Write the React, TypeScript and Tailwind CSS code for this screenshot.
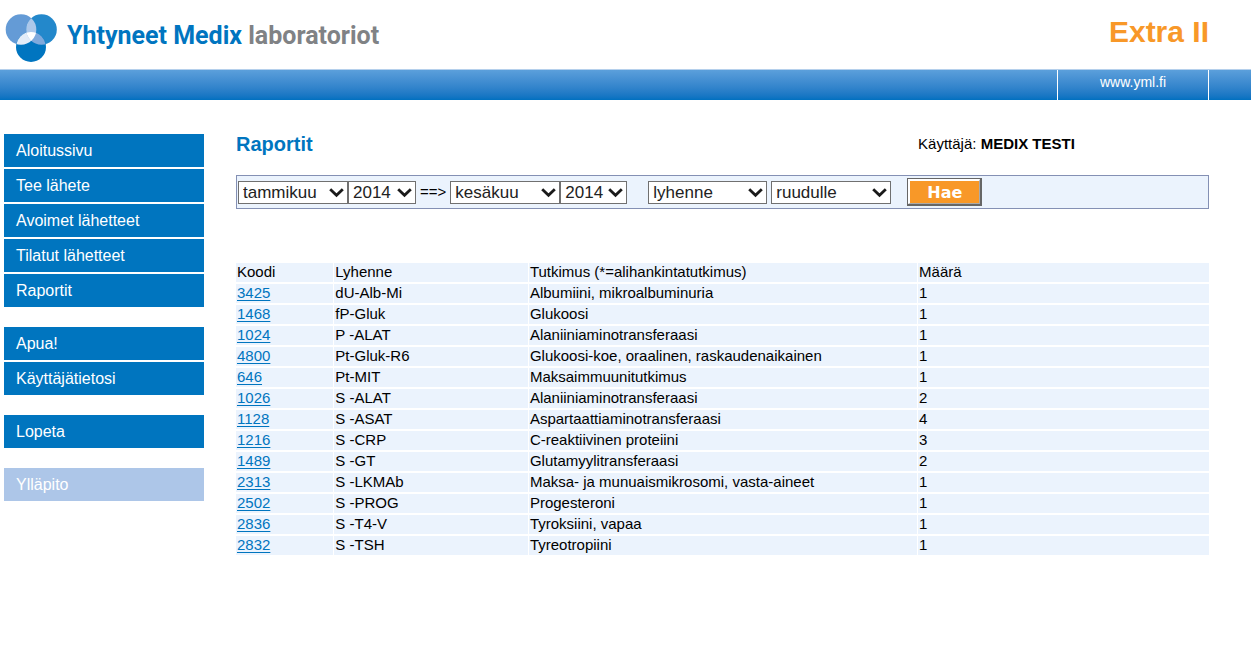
type NavItem = { label: string; muted?: boolean };

const navGroups: NavItem[][] = [
  [
    { label: "Aloitussivu" },
    { label: "Tee lähete" },
    { label: "Avoimet lähetteet" },
    { label: "Tilatut lähetteet" },
    { label: "Raportit" },
  ],
  [{ label: "Apua!" }, { label: "Käyttäjätietosi" }],
  [{ label: "Lopeta" }],
  [{ label: "Ylläpito", muted: true }],
];

const months = [
  "tammikuu",
  "helmikuu",
  "maaliskuu",
  "huhtikuu",
  "toukokuu",
  "kesäkuu",
  "heinäkuu",
  "elokuu",
  "syyskuu",
  "lokakuu",
  "marraskuu",
  "joulukuu",
];
const years = ["2012", "2013", "2014"];

const rows = [
  { code: "3425", short: "dU-Alb-Mi", name: "Albumiini, mikroalbuminuria", count: 1 },
  { code: "1468", short: "fP-Gluk", name: "Glukoosi", count: 1 },
  { code: "1024", short: "P -ALAT", name: "Alaniiniaminotransferaasi", count: 1 },
  { code: "4800", short: "Pt-Gluk-R6", name: "Glukoosi-koe, oraalinen, raskaudenaikainen", count: 1 },
  { code: "646", short: "Pt-MIT", name: "Maksaimmuunitutkimus", count: 1 },
  { code: "1026", short: "S -ALAT", name: "Alaniiniaminotransferaasi", count: 2 },
  { code: "1128", short: "S -ASAT", name: "Aspartaattiaminotransferaasi", count: 4 },
  { code: "1216", short: "S -CRP", name: "C-reaktiivinen proteiini", count: 3 },
  { code: "1489", short: "S -GT", name: "Glutamyylitransferaasi", count: 2 },
  { code: "2313", short: "S -LKMAb", name: "Maksa- ja munuaismikrosomi, vasta-aineet", count: 1 },
  { code: "2502", short: "S -PROG", name: "Progesteroni", count: 1 },
  { code: "2836", short: "S -T4-V", name: "Tyroksiini, vapaa", count: 1 },
  { code: "2832", short: "S -TSH", name: "Tyreotropiini", count: 1 },
];

function LogoMark() {
  return (
    <svg width="52" height="50" viewBox="0 0 52 50" aria-hidden="true">
      <defs>
        <clipPath id="left">
          <circle cx="16" cy="16.5" r="15.3" />
        </clipPath>
        <clipPath id="right">
          <circle cx="36.5" cy="16.5" r="15.3" />
        </clipPath>
      </defs>
      <circle cx="16" cy="16.5" r="15.3" fill="#649bd6" />
      <circle cx="36.5" cy="16.5" r="15.3" fill="#2388cb" />
      <circle cx="26" cy="34" r="15" fill="#0075c0" />
      <circle cx="36.5" cy="16.5" r="15.3" fill="#adc8ea" clipPath="url(#left)" />
      <circle cx="26" cy="34" r="15" fill="#e3ecf8" clipPath="url(#left)" />
      <circle cx="26" cy="34" r="15" fill="#7fa9dc" clipPath="url(#right)" />
      <g clipPath="url(#left)">
        <circle cx="26" cy="34" r="15" fill="#fff" clipPath="url(#right)" />
      </g>
    </svg>
  );
}

type SelectBoxProps = {
  label: string;
  value: string;
  options: string[];
  width: string;
};

function SelectBox({ label, value, options, width }: SelectBoxProps) {
  return (
    <div className={`relative shrink-0 ${width}`}>
      <select
        aria-label={label}
        defaultValue={value}
        className="block h-[23px] w-full appearance-none border border-[#707070] bg-white pt-px pl-1 text-[17px] leading-5 text-[#222]"
      >
        {options.map((option) => (
          <option key={option}>{option}</option>
        ))}
      </select>
      <svg
        className="pointer-events-none absolute top-[7px] right-1 h-[10px] w-[15px]"
        viewBox="0 0 15 10"
        fill="none"
        aria-hidden="true"
      >
        <path d="M1.2 1.2 L7.5 7.3 L13.8 1.2" stroke="#1a1a1a" strokeWidth="2.8" />
      </svg>
    </div>
  );
}

function Header() {
  return (
    <header>
      <div className="flex h-[69px] items-start justify-between pr-[42px] pl-[5px]">
        <a href="#" className="flex items-start pt-[13px]">
          <LogoMark />
          <span className="ml-[10px] pt-1 font-[Roboto,sans-serif] text-[25px] leading-[38px] font-bold text-[#0075c0]">
            Yhtyneet Medix <span className="text-[#808285]">laboratoriot</span>
          </span>
        </a>
        <div className="pt-[14px] text-[30px] leading-9 font-bold text-[#f89828]">Extra II</div>
      </div>
      <div className="flex h-[31px] justify-end border-t border-[#b5d0ec] bg-linear-to-b from-[#5b9fdb] to-[#0070c0] pr-[42px]">
        <a
          href="#"
          className="w-[152px] border-x border-white text-center text-[14px] leading-6 text-white"
        >
          www.yml.fi
        </a>
      </div>
    </header>
  );
}

function Sidebar() {
  return (
    <nav className="flex w-[200px] shrink-0 flex-col gap-5">
      {navGroups.map((group, i) => (
        <ul key={i} className="flex flex-col gap-[2px]">
          {group.map((item) => (
            <li key={item.label}>
              <a
                href="#"
                className={`block pl-3 text-[16px] leading-[33px] text-white ${
                  item.muted ? "bg-[#adc6e8]" : "bg-[#0075bf]"
                }`}
              >
                {item.label}
              </a>
            </li>
          ))}
        </ul>
      ))}
    </nav>
  );
}

function FilterBar() {
  return (
    <form
      className="mt-[21px] flex h-[34px] items-center border border-[#8490b4] bg-[#ebf3fd] pl-px"
      onSubmit={(e) => e.preventDefault()}
    >
      <SelectBox label="Alkukuukausi" value="tammikuu" options={months} width="w-[110px]" />
      <SelectBox label="Alkuvuosi" value="2014" options={years} width="w-[68px]" />
      <span className="px-1">==&gt;</span>
      <SelectBox label="Loppukuukausi" value="kesäkuu" options={months} width="w-[110px]" />
      <SelectBox label="Loppuvuosi" value="2014" options={years} width="w-[67px]" />
      <div className="ml-[21px] flex items-center gap-1">
        <SelectBox label="Järjestys" value="lyhenne" options={["lyhenne", "koodi"]} width="w-[119px]" />
        <SelectBox label="Tulostus" value="ruudulle" options={["ruudulle", "tiedostoon"]} width="w-[120px]" />
      </div>
      <button
        type="submit"
        className="ml-4 h-7 w-[75px] border border-r-2 border-b-2 border-[#666]"
      >
        <span className="block h-full border-t-2 border-l-2 border-r border-b border-t-white border-l-white border-r-[#aaa] border-b-[#aaa] bg-[#f89828] font-['DejaVu_Sans',sans-serif] text-[16px] leading-6 font-bold text-white">
          Hae
        </span>
      </button>
    </form>
  );
}

function ReportTable() {
  const cell = "border-b-2 border-l border-white px-px pb-[2px] text-left font-normal first:border-l-0";

  return (
    <table className="mt-[54px] w-full table-fixed border-separate border-spacing-0 bg-[#ebf3fd] leading-[17px]">
      <thead>
        <tr>
          <th className={`w-[10%] ${cell}`}>Koodi</th>
          <th className={`w-[20%] ${cell}`}>Lyhenne</th>
          <th className={`w-[40%] ${cell}`}>Tutkimus (*=alihankintatutkimus)</th>
          <th className={`w-[30%] ${cell}`}>Määrä</th>
        </tr>
      </thead>
      <tbody>
        {rows.map((row) => (
          <tr key={row.code}>
            <td className={cell}>
              <a href="#" className="text-[#0075bf] underline decoration-1 underline-offset-2">
                {row.code}
              </a>
            </td>
            <td className={cell}>{row.short}</td>
            <td className={cell}>{row.name}</td>
            <td className={cell}>{row.count}</td>
          </tr>
        ))}
      </tbody>
    </table>
  );
}

export default function App() {
  return (
    <div className="min-h-screen bg-white font-['Liberation_Sans',Arial,sans-serif] text-[15px] text-black">
      <Header />
      <div className="flex gap-8 pt-[34px] pr-[42px] pl-1">
        <Sidebar />
        <main className="min-w-0 flex-1">
          <div className="flex leading-5">
            <h1 className="w-[70%] text-[20px] font-bold text-[#0075bf]">Raportit</h1>
            <p className="w-[30%] pl-px">
              Käyttäjä: <b>MEDIX TESTI</b>
            </p>
          </div>
          <FilterBar />
          <ReportTable />
        </main>
      </div>
    </div>
  );
}
